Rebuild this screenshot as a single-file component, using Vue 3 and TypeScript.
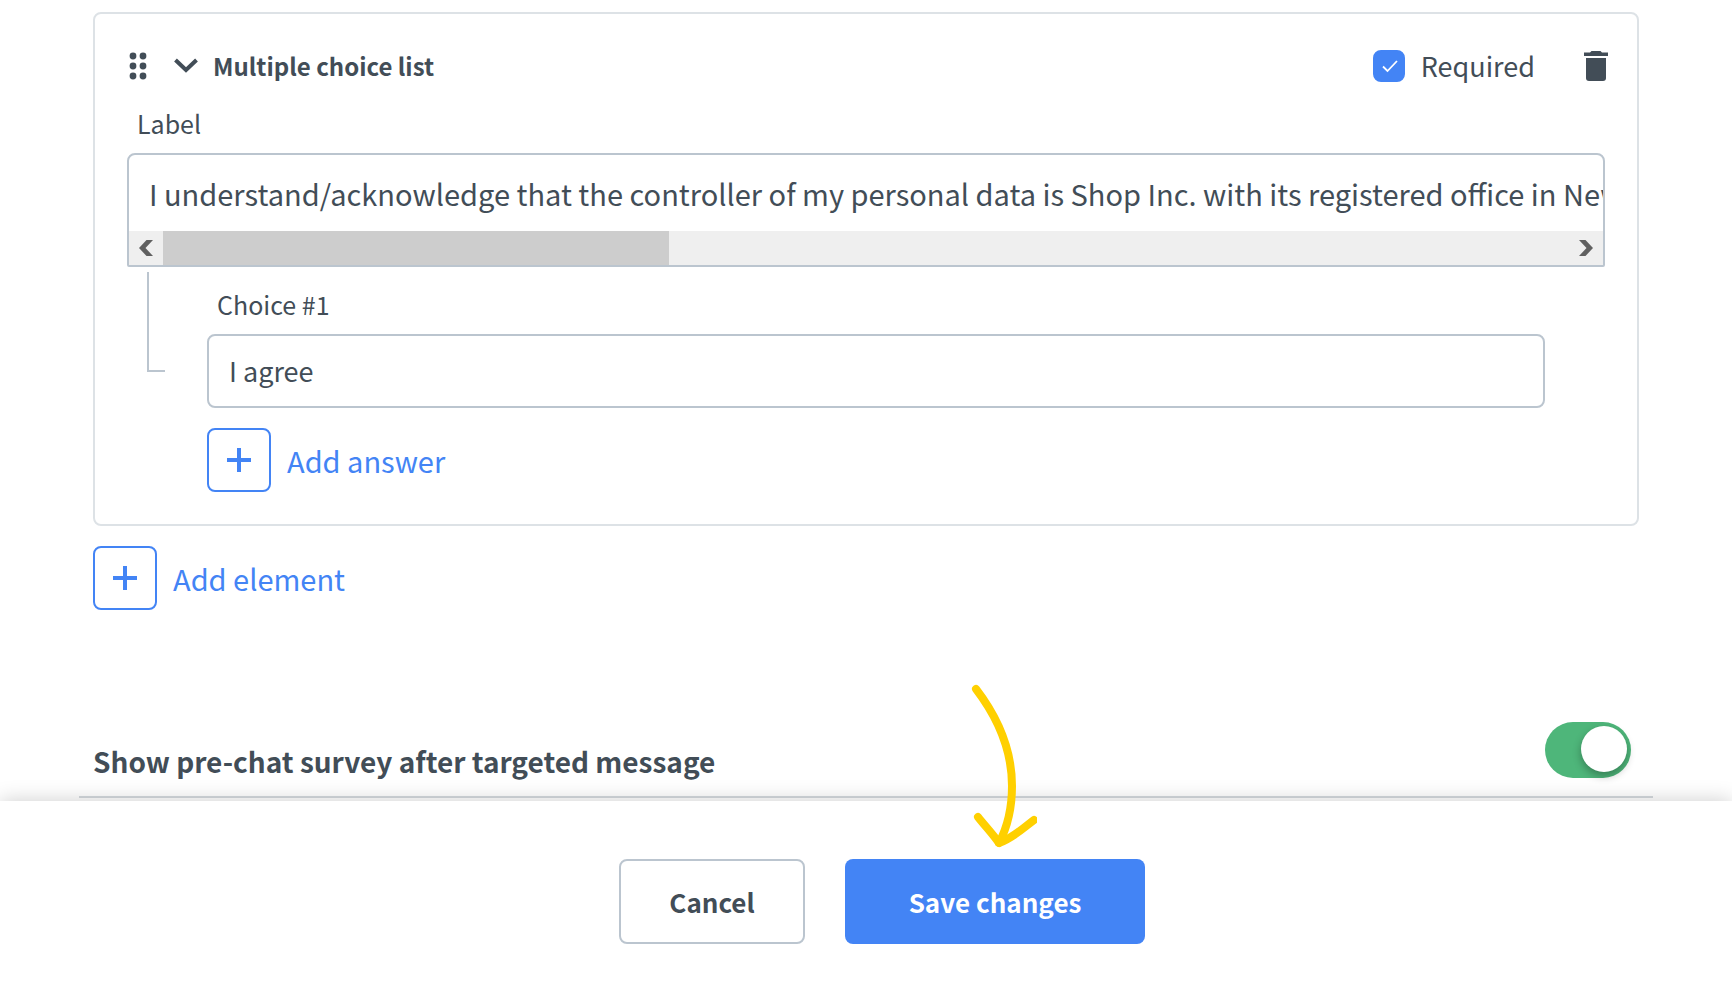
<script setup lang="ts">
import { ref } from 'vue'

const required = ref(true)
const showSurvey = ref(true)
const consent = ref(
  'I understand/acknowledge that the controller of my personal data is Shop Inc. with its registered office in New',
)
const answers = ref<string[]>(['I agree'])

function addAnswer(): void {
  answers.value.push('')
}
</script>

<template>
  <div class="page">
    <main class="content">
      <section class="card">
        <header class="card-header">
          <svg class="drag" width="22" height="32" viewBox="0 0 22 32" aria-hidden="true">
            <circle cx="6" cy="6" r="3.4" /><circle cx="16" cy="6" r="3.4" />
            <circle cx="6" cy="16" r="3.4" /><circle cx="16" cy="16" r="3.4" />
            <circle cx="6" cy="26" r="3.4" /><circle cx="16" cy="26" r="3.4" />
          </svg>
          <button class="icon-button collapse" type="button" aria-label="Collapse">
            <svg width="24" height="32" viewBox="0 0 24 32">
              <path d="M1.5 10 L12 20 L22.5 10" fill="none" stroke="#424d57" stroke-width="4" />
            </svg>
          </button>
          <h3 class="card-title">Multiple choice list</h3>
          <label class="required">
            <span class="check">
              <input v-model="required" type="checkbox" />
              <svg width="32" height="32" viewBox="0 0 32 32" aria-hidden="true">
                <path d="M10 16.5 L14.5 21 L24 11" fill="none" stroke="#fff" stroke-width="1.8" />
              </svg>
            </span>
            <span>Required</span>
          </label>
          <button class="icon-button trash" type="button" aria-label="Delete">
            <svg width="24" height="32" viewBox="0 0 24 32">
              <path d="M0 2.5 H6 L7.5 1 H16.5 L18 2.5 H24 V6 H0 Z" fill="#424d57" />
              <path d="M2 8 H22 V28 Q22 31 19 31 H5 Q2 31 2 28 Z" fill="#424d57" />
            </svg>
          </button>
        </header>

        <div class="card-body">
          <label class="field-label" for="consent">Label</label>
          <div class="scroll-field">
            <textarea id="consent" v-model="consent" rows="1" wrap="off" spellcheck="false"></textarea>
            <div class="scrollbar">
              <button type="button" aria-label="Scroll left">
                <svg width="14" height="16" viewBox="0 0 14 16">
                  <path d="M7.5 0 H14 L6.5 8 L14 16 H7.5 L0 8 Z" fill="#606060" />
                </svg>
              </button>
              <div class="track"><div class="thumb"></div></div>
              <button type="button" aria-label="Scroll right">
                <svg width="14" height="16" viewBox="0 0 14 16">
                  <path d="M6.5 0 H0 L7.5 8 L0 16 H6.5 L14 8 Z" fill="#606060" />
                </svg>
              </button>
            </div>
          </div>

          <div class="choices">
            <div class="elbow"></div>
            <div class="choice-list">
              <template v-for="(_, i) in answers" :key="i">
                <label class="field-label" :for="`choice-${i}`">Choice #{{ i + 1 }}</label>
                <input :id="`choice-${i}`" v-model="answers[i]" class="text-input" type="text" />
              </template>
              <button class="add" type="button" @click="addAnswer">
                <span class="plus">
                  <svg width="24" height="24" viewBox="0 0 24 24">
                    <path d="M12 0 V24 M0 12 H24" stroke="#4384f5" stroke-width="4" />
                  </svg>
                </span>
                <span>Add answer</span>
              </button>
            </div>
          </div>
        </div>
      </section>

      <button class="add add-element" type="button">
        <span class="plus">
          <svg width="24" height="24" viewBox="0 0 24 24">
            <path d="M12 0 V24 M0 12 H24" stroke="#4384f5" stroke-width="4" />
          </svg>
        </span>
        <span>Add element</span>
      </button>
    </main>

    <section class="survey">
      <label class="survey-title" for="survey">Show pre-chat survey after targeted message</label>
      <input id="survey" v-model="showSurvey" class="toggle" type="checkbox" role="switch" />
    </section>

    <footer class="footer">
      <button class="btn cancel" type="button">Cancel</button>
      <button class="btn save" type="button">
        Save changes
        <svg class="arrow" width="72" height="172" viewBox="0 0 72 172" aria-hidden="true">
          <g fill="none" stroke="#ffd000" stroke-width="8" stroke-linecap="round" stroke-linejoin="round">
            <path d="M11 9 C37 43 47 74 47 106 C47 126 43 146 34 163" />
            <path d="M13 137 C20 146 27 153 34 163 C48 158 57 149 69 140" />
          </g>
        </svg>
      </button>
    </footer>
  </div>
</template>

<style>
body {
  margin: 0;
  background: #fff;
}
</style>

<style scoped>
.page {
  --ink: #424d57;
  --blue: #4384f5;
  --line: #bbc5cf;
  --soft: #dde2e6;
  display: flex;
  flex-direction: column;
  min-height: 100vh;
  box-sizing: border-box;
  padding-top: 12px;
  overflow: hidden;
  background: #fff;
  color: var(--ink);
  font-family: 'Noto Sans CJK SC', 'Noto Sans', sans-serif;
  font-size: 28px;
  line-height: 32px;
}

.page * {
  box-sizing: border-box;
}

button,
input,
textarea {
  margin: 0;
  font: inherit;
  color: inherit;
}

button {
  padding: 0;
  border: 0;
  background: none;
  cursor: pointer;
}

svg {
  display: block;
  flex: none;
}

.content {
  padding: 0 93px;
}

.card {
  padding: 36px 0 32px;
  border: 2px solid var(--soft);
  border-radius: 8px;
}

.card-header {
  display: flex;
  align-items: center;
  height: 32px;
  padding: 0 24px 0 32px;
}

.drag {
  fill: var(--ink);
}

.collapse {
  margin-left: 25px;
}

.card-title {
  flex: 1;
  margin: 0 0 0 15px;
  font-size: 24px;
  font-weight: 600;
}

.required {
  display: flex;
  align-items: center;
  gap: 16px;
  font-size: 27px;
}

.check {
  display: grid;
}

.check > * {
  grid-area: 1 / 1;
}

.check svg {
  pointer-events: none;
}

.check input {
  appearance: none;
  width: 32px;
  height: 32px;
  border-radius: 8px;
  border: 2px solid var(--line);
}

.check input:checked {
  border-color: var(--blue);
  background: var(--blue);
}

.trash {
  display: flex;
  justify-content: center;
  width: 34px;
  margin-left: 44px;
}

.card-body {
  padding: 25px 32px 0;
}

.field-label {
  display: block;
  margin-bottom: 14px;
  padding-left: 10px;
  font-size: 25px;
}

.scroll-field {
  border: 2px solid var(--line);
  border-radius: 8px 8px 2px 2px;
}

.scroll-field textarea {
  display: block;
  width: 100%;
  height: 76px;
  padding: 18px 0 18px 20px;
  border: 0;
  outline: 0;
  background: none;
  resize: none;
  overflow: hidden;
  font-size: 29px;
  line-height: 40px;
}

.scrollbar {
  display: flex;
  height: 34px;
  background: #efefef;
}

.scrollbar button {
  display: flex;
  align-items: center;
  justify-content: center;
  width: 34px;
}

.track {
  flex: 1;
}

.thumb {
  width: 36%;
  height: 100%;
  background: #cdcdcd;
}

.choices {
  display: flex;
  padding-left: 20px;
}

.elbow {
  width: 18px;
  height: 100px;
  margin-top: 5px;
  border: solid var(--line);
  border-width: 0 0 2px 2px;
}

.choice-list {
  flex: 1;
  padding: 21px 60px 0 42px;
}

.text-input {
  display: block;
  width: 100%;
  height: 74px;
  margin-bottom: 20px;
  padding: 0 20px 2px;
  border: 2px solid var(--line);
  border-radius: 8px;
  background: #fff;
  font-size: 27px;
}

.add {
  display: flex;
  align-items: center;
  gap: 16px;
  color: var(--blue);
  font-size: 29px;
}

.add-element {
  margin-top: 20px;
}

.plus {
  display: flex;
  align-items: center;
  justify-content: center;
  width: 64px;
  height: 64px;
  border: 2px solid var(--blue);
  border-radius: 8px;
}

.survey {
  display: flex;
  align-items: flex-start;
  justify-content: space-between;
  height: 76px;
  margin: 112px 79px 3px;
  padding: 0 22px 0 14px;
  border-bottom: 2px solid #d5dade;
}

.survey-title {
  margin-top: 19px;
  font-weight: 600;
  line-height: 40px;
}

.toggle {
  appearance: none;
  width: 86px;
  height: 56px;
  padding: 4px;
  border-radius: 28px;
  background: #ccd2d8;
}

.toggle::before {
  content: '';
  display: block;
  width: 46px;
  height: 46px;
  border-radius: 50%;
  background: #fff;
  box-shadow: 0 4px 8px rgba(0, 0, 0, 0.3);
}

.toggle:checked {
  background: #4eb67a;
}

.toggle:checked::before {
  margin-left: auto;
}

.footer {
  position: relative;
  display: flex;
  flex: 1;
  align-items: flex-start;
  justify-content: center;
  gap: 40px;
  padding: 58px 0 58px 32px;
  background: #fff;
  box-shadow: 0 0 20px rgba(0, 0, 0, 0.2);
}

.btn {
  height: 85px;
  border-radius: 8px;
  font-size: 26px;
  font-weight: 600;
}

.cancel {
  width: 186px;
  border: 2px solid var(--line);
}

.save {
  position: relative;
  width: 300px;
  background: var(--blue);
  color: #fff;
}

/* Hand-drawn pointer laid over the page, ending above the save button */
.arrow {
  position: absolute;
  left: 120px;
  bottom: 92px;
  pointer-events: none;
}
</style>
